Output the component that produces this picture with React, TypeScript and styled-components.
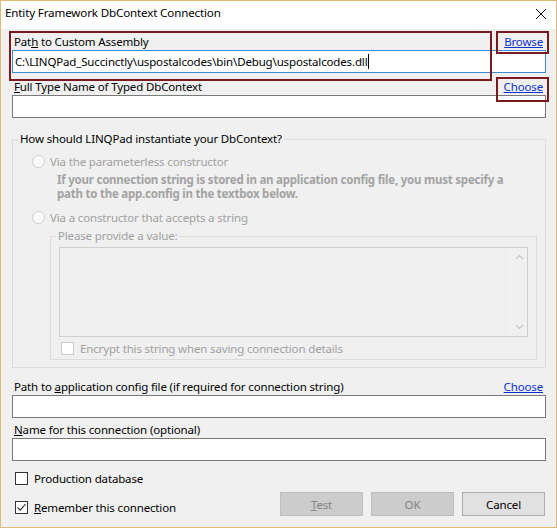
import React from 'react';
import styled, { createGlobalStyle } from 'styled-components';

const GlobalStyle = createGlobalStyle`
  html, body { margin: 0; padding: 0; background: #ffffff; }
  body {
    font-family: "Segoe UI", "Noto Sans", "Open Sans", sans-serif;
    font-size: 11.5px;
    letter-spacing: -0.15px;
    color: #000000;
  }
  * { box-sizing: border-box; }
`;

const Window = styled.div`
  position: relative;
  width: 557px;
  height: 528px;
  border: 1px solid #e2b875;
  background: #f0f0f0;
  display: flex;
  flex-direction: column;
  overflow: hidden;
`;

const TitleBar = styled.div`
  height: 28px;
  flex: none;
  background: #ffffff;
  display: flex;
  align-items: flex-start;
  justify-content: space-between;
  padding: 3px 9px 0 4px;
  line-height: 17px;
`;

const Title = styled.div`
  font-size: 11.6px;
`;

const CloseButton = styled.div`
  width: 12px;
  height: 12px;
  margin-top: 4px;
  display: flex;
`;

const Body = styled.div`
  flex: 1;
  display: flex;
  flex-direction: column;
  padding: 5px 10px 0 11px;
`;

const LabelRow = styled.div<{ $gap?: number }>`
  display: flex;
  justify-content: space-between;
  align-items: center;
  height: 16px;
  line-height: 16px;
  padding: 0 3px 0 2px;
  margin-top: ${(p) => p.$gap ?? 0}px;
`;

const Link = styled.span`
  color: #0a32d2;
  text-decoration: underline;
  cursor: pointer;
`;

const TextBox = styled.div<{ $focused?: boolean }>`
  height: 23px;
  border: 1px solid ${(p) => (p.$focused ? '#3c8cd6' : '#7a7a7a')};
  background: #ffffff;
  display: flex;
  align-items: center;
  padding: 0 2px;
  line-height: 16px;
  white-space: nowrap;
`;

const Caret = styled.span`
  display: inline-block;
  width: 1px;
  height: 15px;
  background: #000000;
  margin-left: 1px;
`;

const Group = styled.fieldset<{ $inset?: number; $gap?: number }>`
  margin: ${(p) => p.$gap ?? 0}px 0 0 ${(p) => p.$inset ?? 0}px;
  min-width: 0;
  border: 1px solid #dcdcdc;
  padding: 0;
`;

const GroupTitle = styled.legend<{ $muted?: boolean }>`
  margin-left: 5px;
  padding: 0 2px;
  line-height: 16px;
  color: ${(p) => (p.$muted ? '#a0a0a0' : '#000000')};
`;

const GroupBody = styled.div`
  display: flex;
  flex-direction: column;
  padding: 6px 8px 7px 19px;
`;

const OptionRow = styled.div<{ $gap?: number }>`
  display: flex;
  align-items: center;
  height: 16px;
  margin-top: ${(p) => p.$gap ?? 0}px;
  color: #a0a0a0;
`;

const Radio = styled.span`
  width: 13px;
  height: 13px;
  border-radius: 50%;
  border: 1px solid #cfcfcf;
  background: #f9f9f9;
  margin-right: 5px;
`;

const Hint = styled.div`
  margin: 4px 0 0 25px;
  font-weight: 700;
  letter-spacing: -0.23px;
  color: #a3a3a3;
  line-height: 14px;
`;

const InnerBody = styled.div`
  display: flex;
  flex-direction: column;
  padding: 3px 8px 3px 8px;
`;

const TextArea = styled.div`
  height: 90px;
  border: 1px solid #cfcfcf;
  background: #f0f0f0;
  display: flex;
  justify-content: flex-end;
`;

const ScrollBar = styled.div`
  width: 17px;
  display: flex;
  flex-direction: column;
  justify-content: space-between;
  align-items: center;
  padding: 6px 0 6px;
  border-left: 1px solid #f7f7f7;
`;

const CheckRow = styled.label<{ $muted?: boolean; $gap?: number; $indent?: number }>`
  display: flex;
  align-items: center;
  height: 16px;
  margin-top: ${(p) => p.$gap ?? 0}px;
  padding-left: ${(p) => p.$indent ?? 0}px;
  color: ${(p) => (p.$muted ? '#a0a0a0' : '#000000')};
`;

const Box = styled.span<{ $muted?: boolean }>`
  width: 13px;
  height: 13px;
  border: 1px solid ${(p) => (p.$muted ? '#cccccc' : '#333333')};
  background: #ffffff;
  margin-right: 6px;
  display: flex;
  align-items: center;
  justify-content: center;
`;

const Footer = styled.div`
  display: flex;
  align-items: flex-end;
  justify-content: space-between;
  height: 24px;
  margin-top: 6px;
  padding-left: 3px;
`;

const Buttons = styled.div`
  display: flex;
  gap: 8px;
  margin-right: 1px;
`;

const Button = styled.div<{ $disabled?: boolean }>`
  width: 83px;
  height: 24px;
  display: flex;
  align-items: center;
  justify-content: center;
  background: ${(p) => (p.$disabled ? '#cccccc' : '#e1e1e1')};
  border: 1px solid ${(p) => (p.$disabled ? '#bfbfbf' : '#adadad')};
  color: ${(p) => (p.$disabled ? '#838383' : '#000000')};
`;

const Highlight = styled.div<{ $x: number; $y: number; $w: number; $h: number }>`
  position: absolute;
  left: ${(p) => p.$x}px;
  top: ${(p) => p.$y}px;
  width: ${(p) => p.$w}px;
  height: ${(p) => p.$h}px;
  border: 2px solid #7b1a1e;
  pointer-events: none;
`;

const Chevron = ({ up }: { up?: boolean }) => (
  <svg width="9" height="6" viewBox="0 0 9 6">
    <path
      d={up ? 'M1 5 L4.5 1.5 L8 5' : 'M1 1 L4.5 4.5 L8 1'}
      fill="none"
      stroke="#c4c4c4"
      strokeWidth="1.2"
    />
  </svg>
);

const Check = () => (
  <svg width="11" height="11" viewBox="0 0 11 11">
    <path d="M1.5 5.5 L4.2 8.2 L9.5 2.2" fill="none" stroke="#333333" strokeWidth="1.1" />
  </svg>
);

export default function App() {
  return (
    <>
      <GlobalStyle />
      <Window>
        <TitleBar>
          <Title>Entity Framework DbContext Connection</Title>
          <CloseButton>
            <svg width="12" height="12" viewBox="0 0 12 12">
              <path d="M1 1 L11 11 M11 1 L1 11" stroke="#000000" strokeWidth="1" />
            </svg>
          </CloseButton>
        </TitleBar>
        <Body>
          <LabelRow>
            <span>
              Pat<u>h</u> to Custom Assembly
            </span>
            <Link>Browse</Link>
          </LabelRow>
          <TextBox $focused>
            C:\LINQPad_Succinctly\uspostalcodes\bin\Debug\uspostalcodes.dll
            <Caret />
          </TextBox>

          <LabelRow $gap={6}>
            <span>
              <u>F</u>ull Type Name of Typed DbContext
            </span>
            <Link>Choose</Link>
          </LabelRow>
          <TextBox />

          <Group $gap={13}>
            <GroupTitle>How should LINQPad instantiate your DbContext?</GroupTitle>
            <GroupBody>
              <OptionRow>
                <Radio />
                Via the parameterless constructor
              </OptionRow>
              <Hint>
                If your connection string is stored in an application config file, you must specify a
                <br />
                path to the app.config in the textbox below.
              </Hint>
              <OptionRow $gap={8}>
                <Radio />
                Via a constructor that accepts a string
              </OptionRow>
              <Group $inset={18} $gap={3}>
                <GroupTitle $muted>Please provide a value:</GroupTitle>
                <InnerBody>
                  <TextArea>
                    <ScrollBar>
                      <Chevron up />
                      <Chevron />
                    </ScrollBar>
                  </TextArea>
                  <CheckRow $muted $gap={3} $indent={2}>
                    <Box $muted />
                    Encrypt this string when saving connection details
                  </CheckRow>
                </InnerBody>
              </Group>
            </GroupBody>
          </Group>

          <LabelRow $gap={11}>
            <span>
              Path to <u>a</u>pplication config file (if required for connection string)
            </span>
            <Link>Choose</Link>
          </LabelRow>
          <TextBox />

          <LabelRow $gap={4}>
            <span>
              <u>N</u>ame for this connection (optional)
            </span>
          </LabelRow>
          <TextBox />

          <CheckRow $gap={9} $indent={3}>
            <Box />
            Production database
          </CheckRow>

          <Footer>
            <CheckRow style={{ marginBottom: 1 }}>
              <Box>
                <Check />
              </Box>
              <span>
                <u>R</u>emember this connection
              </span>
            </CheckRow>
            <Buttons>
              <Button $disabled>
                <span>
                  <u>T</u>est
                </span>
              </Button>
              <Button $disabled>OK</Button>
              <Button>Cancel</Button>
            </Buttons>
          </Footer>
        </Body>
        <Highlight $x={8} $y={30} $w={483} $h={50} />
        <Highlight $x={495} $y={30} $w={53} $h={23} />
        <Highlight $x={495} $y={76} $w={53} $h={25} />
      </Window>
    </>
  );
}
